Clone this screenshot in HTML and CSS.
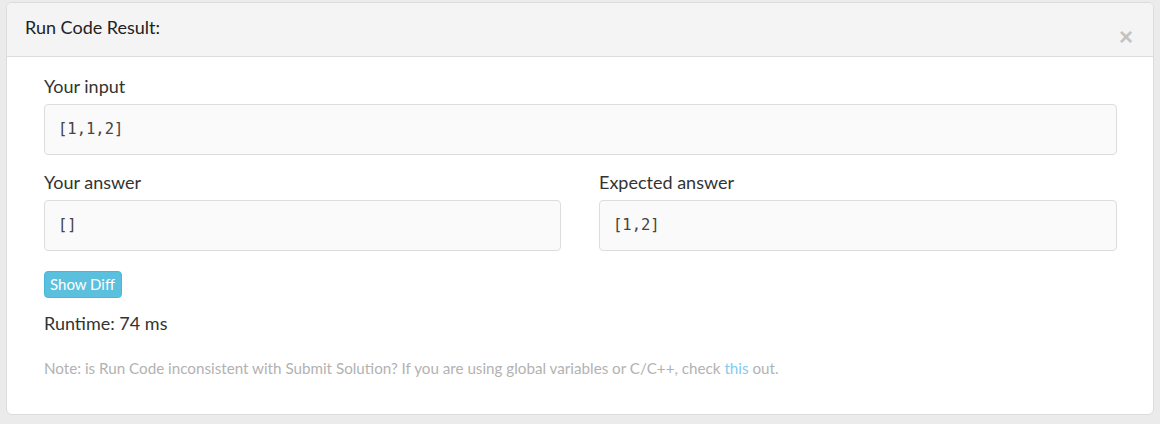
FILE: index.html
```html
<!DOCTYPE html>
<html>
<head>
<meta charset="utf-8">
<link rel="stylesheet" href="styles.css">
</head>
<body>
<div class="panel">
  <div class="panel-header">
    <h4 class="title">Run Code Result:</h4>
    <span class="close">&times;</span>
  </div>
  <div class="panel-body">
    <div class="field">
      <div class="label">Your input</div>
      <div class="box">[1,1,2]</div>
    </div>
    <div class="row">
      <div class="field">
        <div class="label">Your answer</div>
        <div class="box">[]</div>
      </div>
      <div class="field">
        <div class="label">Expected answer</div>
        <div class="box">[1,2]</div>
      </div>
    </div>
    <button class="btn-diff">Show Diff</button>
    <div class="runtime">Runtime: 74 ms</div>
    <div class="note">Note: is Run Code inconsistent with Submit Solution? If you are using global variables or C/C++, check <a href="#">this</a> out.</div>
  </div>
</div>
</body>
</html>
```
FILE: styles.css
```css
html, body {
  margin: 0;
  padding: 0;
  background: #ebebeb;
}
body {
  padding: 2px 6px 0 6px;
  font-family: Lato, "Open Sans", sans-serif;
  color: #333;
}
.panel {
  width: 1148px;
  height: 413px;
  box-sizing: border-box;
  background: #fff;
  border: 1px solid #dcdcdc;
  border-radius: 6px;
  overflow: hidden;
}
.panel-header {
  height: 53px;
  background: #f4f4f4;
  border-bottom: 1px solid #dcdcdc;
  display: flex;
  justify-content: space-between;
  padding: 0 20px 0 18px;
}
.title {
  margin: 0;
  font-size: 18px;
  font-weight: 400;
  line-height: 20px;
  padding-top: 14px;
  color: #222;
}
.close {
  font-size: 24px;
  line-height: 24px;
  font-weight: 700;
  color: #c3c3c3;
  padding-top: 22px;
  font-family: "Liberation Sans", Arial, sans-serif;
}
.panel-body {
  padding: 19px 36px 0 37px;
}
.label {
  font-size: 18px;
  line-height: 20px;
  margin-bottom: 8px;
}
.box {
  height: 51px;
  box-sizing: border-box;
  background: #fafafa;
  border: 1px solid #dddddd;
  border-radius: 4px;
  padding: 0 13px;
  font-family: "DejaVu Sans Mono", monospace;
  font-size: 15.5px;
  line-height: 49px;
  color: #444;
}
.row {
  display: grid;
  grid-template-columns: 517px 1fr;
  gap: 38px;
  margin-top: 17px;
}
.btn-diff {
  margin-top: 20px;
  display: block;
  height: 27px;
  padding: 0 6px 0 5px;
  background: #5bc0de;
  border: 1px solid #46b8da;
  border-radius: 4px;
  color: #fff;
  font-family: Lato, sans-serif;
  font-size: 15px;
  line-height: 25px;
}
.runtime {
  font-size: 18px;
  line-height: 20px;
  margin-top: 15px;
}
.note {
  margin-top: 25px;
  font-size: 15.2px;
  line-height: 20px;
  color: #b2b2b2;
}
.note a {
  color: #80ccf0;
  text-decoration: none;
}
```
